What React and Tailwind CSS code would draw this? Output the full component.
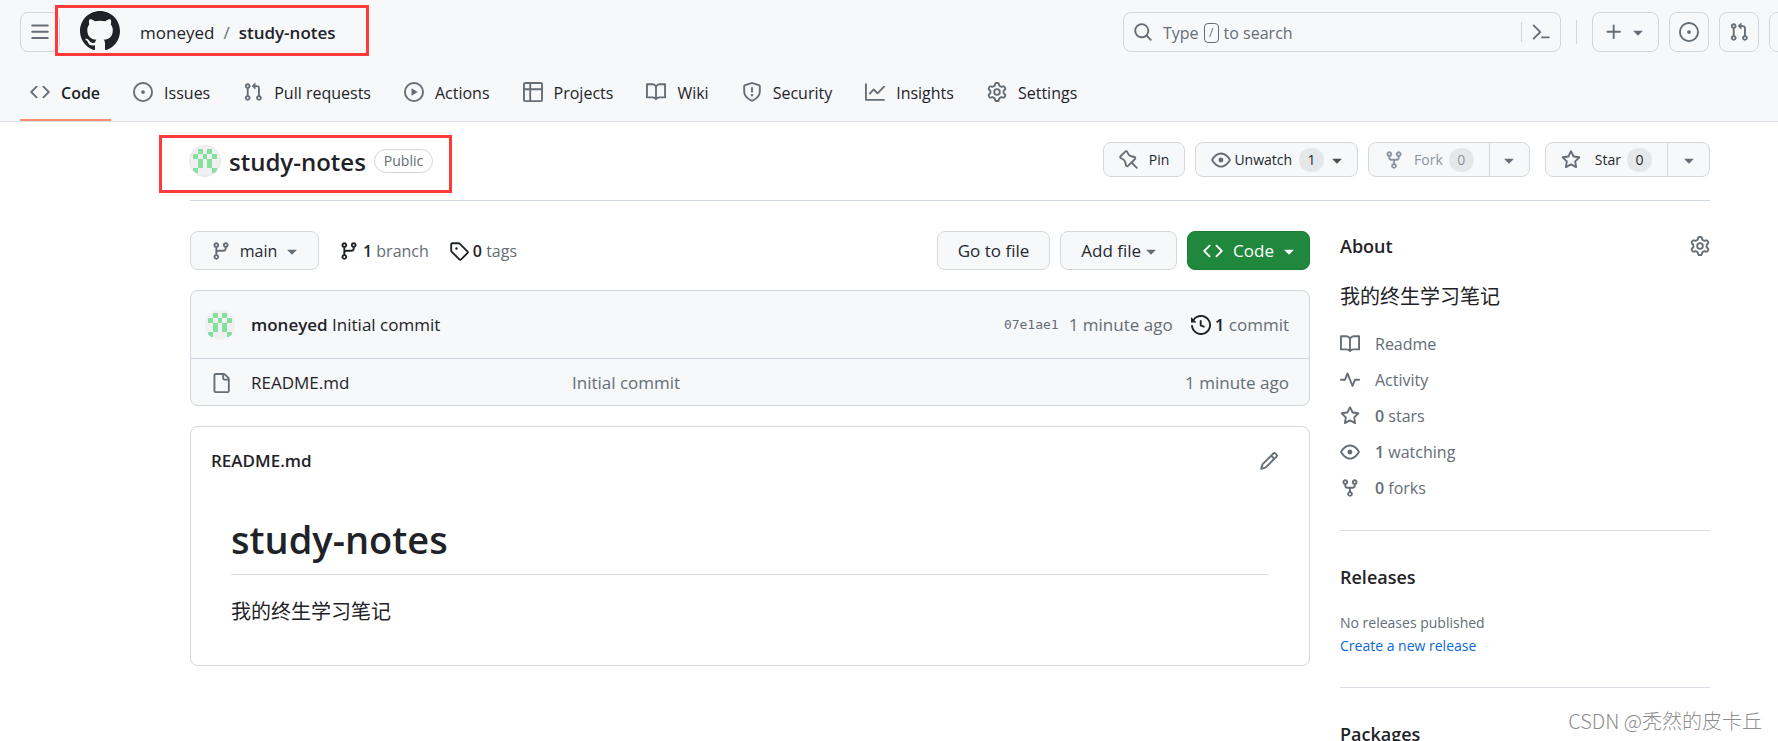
import React from "react";

const PATHS = {
  bars: "M1 2.75A.75.75 0 0 1 1.75 2h12.5a.75.75 0 0 1 0 1.5H1.75A.75.75 0 0 1 1 2.75Zm0 5A.75.75 0 0 1 1.75 7h12.5a.75.75 0 0 1 0 1.5H1.75A.75.75 0 0 1 1 7.75ZM1.75 12h12.5a.75.75 0 0 1 0 1.5H1.75a.75.75 0 0 1 0-1.5Z",
  github:
    "M8 0c4.42 0 8 3.58 8 8a8.013 8.013 0 0 1-5.45 7.59c-.4.08-.55-.17-.55-.38 0-.27.01-1.13.01-2.2 0-.75-.25-1.23-.54-1.48 1.78-.2 3.65-.88 3.65-3.95 0-.88-.31-1.59-.82-2.15.08-.2.36-1.02-.08-2.12 0 0-.67-.22-2.2.82-.64-.18-1.32-.27-2-.27-.68 0-1.36.09-2 .27-1.53-1.03-2.2-.82-2.2-.82-.44 1.1-.16 1.92-.08 2.12-.51.56-.82 1.28-.82 2.15 0 3.06 1.86 3.75 3.64 3.95-.23.2-.44.55-.51 1.07-.46.21-1.61.55-2.33-.66-.15-.24-.6-.83-1.23-.82-.67.01-.27.38.01.53.34.19.73.9.82 1.13.16.45.68 1.31 2.69.94 0 .67.01 1.3.01 1.49 0 .21-.15.45-.55.38A7.995 7.995 0 0 1 0 8c0-4.42 3.58-8 8-8Z",
  code: "m11.28 3.22 4.25 4.25a.75.75 0 0 1 0 1.06l-4.25 4.25a.749.749 0 0 1-1.275-.326.749.749 0 0 1 .215-.734L13.94 8l-3.72-3.72a.749.749 0 0 1 .326-1.275.749.749 0 0 1 .734.215Zm-6.56 0a.751.751 0 0 1 1.042.018.751.751 0 0 1 .018 1.042L2.06 8l3.72 3.72a.749.749 0 0 1-.326 1.275.749.749 0 0 1-.734-.215L.47 8.53a.75.75 0 0 1 0-1.06Z",
  issue:
    "M8 9.5a1.5 1.5 0 1 0 0-3 1.5 1.5 0 0 0 0 3ZM8 0a8 8 0 1 1 0 16A8 8 0 0 1 8 0ZM1.5 8a6.5 6.5 0 1 0 13 0 6.5 6.5 0 0 0-13 0Z",
  pull: "M1.5 3.25a2.25 2.25 0 1 1 3 2.122v5.256a2.251 2.251 0 1 1-1.5 0V5.372A2.25 2.25 0 0 1 1.5 3.25Zm5.677-.177L9.573.677A.25.25 0 0 1 10 .854V2.5h1A2.5 2.5 0 0 1 13.5 5v5.628a2.251 2.251 0 1 1-1.5 0V5a1 1 0 0 0-1-1h-1v1.646a.25.25 0 0 1-.427.177L7.177 3.427a.25.25 0 0 1 0-.354ZM3.75 2.5a.75.75 0 1 0 0 1.5.75.75 0 0 0 0-1.5Zm0 9.5a.75.75 0 1 0 0 1.5.75.75 0 0 0 0-1.5Zm8.25.75a.75.75 0 1 0 1.5 0 .75.75 0 0 0-1.5 0Z",
  play: "M8 0a8 8 0 1 1 0 16A8 8 0 0 1 8 0ZM1.5 8a6.5 6.5 0 1 0 13 0 6.5 6.5 0 0 0-13 0Zm4.879-2.773 4.264 2.559a.25.25 0 0 1 0 .428l-4.264 2.559A.25.25 0 0 1 6 10.559V5.442a.25.25 0 0 1 .379-.215Z",
  table:
    "M0 1.75C0 .784.784 0 1.75 0h12.5C15.216 0 16 .784 16 1.75v12.5A1.75 1.75 0 0 1 14.25 16H1.75A1.75 1.75 0 0 1 0 14.25ZM6.5 6.5v8h7.75a.25.25 0 0 0 .25-.25V6.5Zm8-1.5V1.75a.25.25 0 0 0-.25-.25H6.5V5Zm-13 1.5v7.75c0 .138.112.25.25.25H5v-8ZM5 5V1.5H1.75a.25.25 0 0 0-.25.25V5Z",
  book: "M0 1.75A.75.75 0 0 1 .75 1h4.253c1.227 0 2.317.59 3 1.501A3.743 3.743 0 0 1 11.006 1h4.245a.75.75 0 0 1 .75.75v10.5a.75.75 0 0 1-.75.75h-4.507a2.25 2.25 0 0 0-1.591.659l-.622.621a.75.75 0 0 1-1.06 0l-.622-.621A2.25 2.25 0 0 0 5.258 13H.75a.75.75 0 0 1-.75-.75Zm7.251 10.324.004-5.073-.002-2.253A2.25 2.25 0 0 0 5.003 2.5H1.5v9h3.757a3.75 3.75 0 0 1 1.994.574ZM8.755 4.75l-.004 7.322a3.752 3.752 0 0 1 1.992-.572H14.5v-9h-3.495a2.25 2.25 0 0 0-2.25 2.25Z",
  shield:
    "M7.467.133a1.748 1.748 0 0 1 1.066 0l5.25 1.68A1.75 1.75 0 0 1 15 3.48V7c0 1.566-.32 3.182-1.303 4.682-.983 1.498-2.585 2.813-5.032 3.855a1.697 1.697 0 0 1-1.33 0c-2.447-1.042-4.049-2.357-5.032-3.855C1.32 10.182 1 8.566 1 7V3.48a1.75 1.75 0 0 1 1.217-1.667Zm.61 1.429a.25.25 0 0 0-.153 0l-5.25 1.68a.25.25 0 0 0-.174.238V7c0 1.358.275 2.666 1.057 3.86.784 1.194 2.121 2.34 4.366 3.297a.196.196 0 0 0 .154 0c2.245-.956 3.582-2.104 4.366-3.298C13.225 9.666 13.5 8.36 13.5 7V3.48a.251.251 0 0 0-.174-.237l-5.25-1.68ZM8.75 4.75v3a.75.75 0 0 1-1.5 0v-3a.75.75 0 0 1 1.5 0ZM9 10.5a1 1 0 1 1-2 0 1 1 0 0 1 2 0Z",
  graph:
    "M1.5 1.75V13.5h13.75a.75.75 0 0 1 0 1.5H.75a.75.75 0 0 1-.75-.75V1.75a.75.75 0 0 1 1.5 0Zm14.28 2.53-5.25 5.25a.75.75 0 0 1-1.06 0L7 7.06 4.28 9.78a.751.751 0 0 1-1.042-.018.751.751 0 0 1-.018-1.042l3.25-3.25a.75.75 0 0 1 1.06 0L10 7.94l4.72-4.72a.751.751 0 0 1 1.042.018.751.751 0 0 1 .018 1.042Z",
  gear: "M8 0a8.2 8.2 0 0 1 .701.031C9.444.095 9.99.645 10.16 1.29l.288 1.107c.018.066.079.158.212.224.231.114.454.243.668.386.123.082.233.09.299.071l1.103-.303c.644-.176 1.392.021 1.82.63.27.385.506.792.704 1.218.315.675.111 1.422-.364 1.891l-.814.806c-.049.048-.098.147-.088.294.016.257.016.515 0 .772-.01.147.038.246.088.294l.814.806c.475.469.679 1.216.364 1.891a7.977 7.977 0 0 1-.704 1.217c-.428.61-1.176.807-1.82.63l-1.102-.302c-.067-.019-.177-.011-.3.071a5.909 5.909 0 0 1-.668.386c-.133.066-.194.158-.211.224l-.29 1.106c-.168.646-.715 1.196-1.458 1.26a8.006 8.006 0 0 1-1.402 0c-.743-.064-1.289-.614-1.458-1.26l-.289-1.106c-.018-.066-.079-.158-.212-.224a5.738 5.738 0 0 1-.668-.386c-.123-.082-.233-.09-.299-.071l-1.103.303c-.644.176-1.392-.021-1.82-.63a8.12 8.12 0 0 1-.704-1.218c-.315-.675-.111-1.422.363-1.891l.815-.806c.05-.048.098-.147.088-.294a6.214 6.214 0 0 1 0-.772c.01-.147-.038-.246-.088-.294l-.815-.806C.635 6.045.431 5.298.746 4.623a7.92 7.92 0 0 1 .704-1.217c.428-.61 1.176-.807 1.82-.63l1.102.302c.067.019.177.011.3-.071.214-.143.437-.272.668-.386.133-.066.194-.158.211-.224l.29-1.106C6.009.645 6.556.095 7.299.03 7.53.01 7.764 0 8 0Zm-.571 1.525c-.036.003-.108.036-.137.146l-.289 1.105c-.147.561-.549.967-.998 1.189-.173.086-.34.183-.5.29-.417.278-.97.423-1.529.27l-1.103-.303c-.109-.03-.175.016-.195.045-.22.312-.412.644-.573.99-.014.031-.021.11.059.19l.815.806c.411.406.562.957.53 1.456a4.709 4.709 0 0 0 0 .582c.032.499-.119 1.05-.53 1.456l-.815.806c-.081.08-.073.159-.059.19.162.346.353.677.573.989.02.03.085.076.195.046l1.102-.303c.56-.153 1.113-.008 1.53.27.161.107.328.204.501.29.447.222.85.629.997 1.189l.289 1.105c.029.109.101.143.137.146a6.6 6.6 0 0 0 1.142 0c.036-.003.108-.036.137-.146l.289-1.105c.147-.561.549-.967.998-1.189.173-.086.34-.183.5-.29.417-.278.97-.423 1.529-.27l1.103.303c.109.029.175-.016.195-.045.22-.313.411-.644.573-.99.014-.031.021-.11-.059-.19l-.815-.806c-.411-.406-.562-.957-.53-1.456a4.709 4.709 0 0 0 0-.582c-.032-.499.119-1.05.53-1.456l.815-.806c.081-.08.073-.159.059-.19a6.464 6.464 0 0 0-.573-.989c-.02-.03-.085-.076-.195-.046l-1.102.303c-.56.153-1.113.008-1.53-.27a4.44 4.44 0 0 0-.501-.29c-.447-.222-.85-.629-.997-1.189l-.289-1.105c-.029-.11-.101-.143-.137-.146a6.6 6.6 0 0 0-1.142 0ZM11 8a3 3 0 1 1-6 0 3 3 0 0 1 6 0ZM9.5 8a1.5 1.5 0 1 0-3.001.001A1.5 1.5 0 0 0 9.5 8Z",
  search:
    "M10.68 11.74a6 6 0 0 1-7.922-8.982 6 6 0 0 1 8.982 7.922l3.04 3.04a.749.749 0 0 1-.326 1.275.749.749 0 0 1-.734-.215ZM11.5 7a4.499 4.499 0 1 0-8.997 0A4.499 4.499 0 0 0 11.5 7Z",
  command:
    "m6.354 8.04-4.773 4.773a.75.75 0 1 0 1.061 1.06L7.945 8.57a.75.75 0 0 0 0-1.06L2.642 2.206a.75.75 0 0 0-1.06 1.061L6.353 8.04ZM8.75 11.5a.75.75 0 0 0 0 1.5h5.5a.75.75 0 0 0 0-1.5h-5.5Z",
  plus: "M7.75 2a.75.75 0 0 1 .75.75V7h4.25a.75.75 0 0 1 0 1.5H8.5v4.25a.75.75 0 0 1-1.5 0V8.5H2.75a.75.75 0 0 1 0-1.5H7V2.75A.75.75 0 0 1 7.75 2Z",
  triangle:
    "m4.427 7.427 3.396 3.396a.25.25 0 0 0 .354 0l3.396-3.396A.25.25 0 0 0 11.396 7H4.604a.25.25 0 0 0-.177.427Z",
  pin: "M4.456.734a1.75 1.75 0 0 1 2.826.504l.613 1.327a3.081 3.081 0 0 0 2.084 1.707l2.454.584c1.332.317 1.8 1.972.832 2.94L11.06 10l3.72 3.72a.748.748 0 0 1-.332 1.265.75.75 0 0 1-.729-.205L10 11.06l-2.204 2.205c-.968.968-2.623.5-2.94-.832l-.584-2.454a3.081 3.081 0 0 0-1.707-2.084l-1.327-.613a1.75 1.75 0 0 1-.504-2.826L4.456.734ZM5.92 1.866a.25.25 0 0 0-.404-.072L1.794 5.516a.25.25 0 0 0 .072.404l1.328.613A4.582 4.582 0 0 1 5.73 9.63l.584 2.454a.25.25 0 0 0 .42.12l5.47-5.47a.25.25 0 0 0-.12-.42L9.63 5.73a4.581 4.581 0 0 1-3.098-2.537L5.92 1.866Z",
  eye: "M8 2c1.981 0 3.671.992 4.933 2.078 1.27 1.091 2.187 2.345 2.637 3.023a1.62 1.62 0 0 1 0 1.798c-.45.678-1.367 1.932-2.637 3.023C11.67 13.008 9.981 14 8 14c-1.981 0-3.671-.992-4.933-2.078C1.797 10.83.88 9.576.43 8.898a1.62 1.62 0 0 1 0-1.798c.45-.677 1.367-1.931 2.637-3.022C4.33 2.992 6.019 2 8 2ZM1.679 7.932a.12.12 0 0 0 0 .136c.411.622 1.241 1.75 2.366 2.717C5.176 11.758 6.527 12.5 8 12.5c1.473 0 2.825-.742 3.955-1.715 1.124-.967 1.954-2.096 2.366-2.717a.12.12 0 0 0 0-.136c-.412-.621-1.242-1.75-2.366-2.717C10.824 4.242 9.473 3.5 8 3.5c-1.473 0-2.825.742-3.955 1.715-1.124.967-1.954 2.096-2.366 2.717ZM8 10a2 2 0 1 1-.001-3.999A2 2 0 0 1 8 10Z",
  fork: "M5 5.372v.878c0 .414.336.75.75.75h4.5a.75.75 0 0 0 .75-.75v-.878a2.25 2.25 0 1 1 1.5 0v.878a2.25 2.25 0 0 1-2.25 2.25h-1.5v2.128a2.251 2.251 0 1 1-1.5 0V8.5h-1.5A2.25 2.25 0 0 1 3.5 6.25v-.878a2.25 2.25 0 1 1 1.5 0ZM5 3.25a.75.75 0 1 0-1.5 0 .75.75 0 0 0 1.5 0Zm6.75.75a.75.75 0 1 0 0-1.5.75.75 0 0 0 0 1.5Zm-3 8.75a.75.75 0 1 0-1.5 0 .75.75 0 0 0 1.5 0Z",
  star: "M8 .25a.75.75 0 0 1 .673.418l1.882 3.815 4.21.612a.75.75 0 0 1 .416 1.279l-3.046 2.97.719 4.192a.751.751 0 0 1-1.088.791L8 12.347l-3.766 1.98a.75.75 0 0 1-1.088-.79l.72-4.194L.818 6.374a.75.75 0 0 1 .416-1.28l4.21-.611L7.327.668A.75.75 0 0 1 8 .25Zm0 2.445L6.615 5.5a.75.75 0 0 1-.564.41l-3.097.45 2.24 2.184a.75.75 0 0 1 .216.664l-.528 3.084 2.769-1.456a.75.75 0 0 1 .698 0l2.77 1.456-.53-3.084a.75.75 0 0 1 .216-.664l2.24-2.183-3.096-.45a.75.75 0 0 1-.564-.41L8 2.694Z",
  branch:
    "M9.5 3.25a2.25 2.25 0 1 1 3 2.122V6A2.5 2.5 0 0 1 10 8.5H6a1 1 0 0 0-1 1v1.128a2.251 2.251 0 1 1-1.5 0V5.372a2.25 2.25 0 1 1 1.5 0v1.836A2.493 2.493 0 0 1 6 7h4a1 1 0 0 0 1-1v-.628A2.25 2.25 0 0 1 9.5 3.25Zm-6 0a.75.75 0 1 0 1.5 0 .75.75 0 0 0-1.5 0Zm8.25-.75a.75.75 0 1 0 0 1.5.75.75 0 0 0 0-1.5ZM4.25 12a.75.75 0 1 0 0 1.5.75.75 0 0 0 0-1.5Z",
  tag: "M1 7.775V2.75C1 1.784 1.784 1 2.75 1h5.025c.464 0 .91.184 1.238.513l6.25 6.25a1.75 1.75 0 0 1 0 2.474l-5.026 5.026a1.75 1.75 0 0 1-2.474 0l-6.25-6.25A1.752 1.752 0 0 1 1 7.775Zm1.5 0c0 .066.026.13.073.177l6.25 6.25a.25.25 0 0 0 .354 0l5.025-5.025a.25.25 0 0 0 0-.354l-6.25-6.25a.25.25 0 0 0-.177-.073H2.75a.25.25 0 0 0-.25.25ZM6 5a1 1 0 1 1 0 2 1 1 0 0 1 0-2Z",
  history:
    "m.427 1.927 1.215 1.215a8.002 8.002 0 1 1-1.6 5.685.75.75 0 1 1 1.493-.154 6.5 6.5 0 1 0 1.18-4.458l1.358 1.358A.25.25 0 0 1 3.896 6H.25A.25.25 0 0 1 0 5.75V2.104a.25.25 0 0 1 .427-.177ZM7.75 4a.75.75 0 0 1 .75.75v2.992l2.028.812a.75.75 0 0 1-.557 1.392l-2.5-1A.751.751 0 0 1 7 8.25v-3.5A.75.75 0 0 1 7.75 4Z",
  file: "M2 1.75C2 .784 2.784 0 3.75 0h6.586c.464 0 .909.184 1.237.513l2.914 2.914c.329.328.513.773.513 1.237v9.586A1.75 1.75 0 0 1 13.25 16h-9.5A1.75 1.75 0 0 1 2 14.25Zm1.75-.25a.25.25 0 0 0-.25.25v12.5c0 .138.112.25.25.25h9.5a.25.25 0 0 0 .25-.25V6h-2.75A1.75 1.75 0 0 1 9 4.25V1.5Zm6.75.062V4.25c0 .138.112.25.25.25h2.688l-.011-.013-2.914-2.914-.013-.011Z",
  pencil:
    "M11.013 1.427a1.75 1.75 0 0 1 2.474 0l1.086 1.086a1.75 1.75 0 0 1 0 2.474l-8.61 8.61c-.21.21-.47.364-.756.445l-3.251.93a.75.75 0 0 1-.927-.928l.929-3.25c.081-.286.235-.547.445-.758l8.61-8.61Zm.176 4.823L9.75 4.81l-6.286 6.287a.253.253 0 0 0-.064.108l-.558 1.953 1.953-.558a.253.253 0 0 0 .108-.064Zm1.238-3.763a.25.25 0 0 0-.354 0L10.811 3.75l1.439 1.44 1.263-1.263a.25.25 0 0 0 0-.354Z",
  pulse:
    "M6 2c.306 0 .582.187.696.471L10 10.731l1.304-3.26A.751.751 0 0 1 12 7h3.25a.75.75 0 0 1 0 1.5h-2.742l-1.812 4.528a.751.751 0 0 1-1.392 0L6 4.77 4.696 8.03A.75.75 0 0 1 4 8.5H.75a.75.75 0 0 1 0-1.5h2.742l1.812-4.529A.751.751 0 0 1 6 2Z",
};

function Icon({ name, className = "size-5 text-[#656d76]" }) {
  return (
    <svg viewBox="0 0 16 16" fill="currentColor" aria-hidden="true" className={`shrink-0 ${className}`}>
      <path d={PATHS[name]} />
    </svg>
  );
}

const CELLS = [
  [1, 0], [3, 0],
  [0, 1], [2, 1], [4, 1],
  [1, 2], [3, 2],
  [1, 3], [3, 3],
  [0, 4], [4, 4],
];

function Avatar({ className }) {
  return (
    <svg viewBox="0 0 32 32" aria-hidden="true" shapeRendering="crispEdges" className={`shrink-0 rounded-full bg-[#f0f0f0] ${className}`}>
      {CELLS.map(([x, y]) => (
        <rect key={`${x}-${y}`} x={3.5 + x * 5} y={3.5 + y * 5} width="5" height="5" fill="#85e0a0" />
      ))}
    </svg>
  );
}

const TABS = [
  ["code", "Code"],
  ["issue", "Issues"],
  ["pull", "Pull requests"],
  ["play", "Actions"],
  ["table", "Projects"],
  ["book", "Wiki"],
  ["shield", "Security"],
  ["graph", "Insights"],
  ["gear", "Settings"],
];

const FACTS = [
  ["book", null, "Readme"],
  ["pulse", null, "Activity"],
  ["star", "0", "stars"],
  ["eye", "1", "watching"],
  ["fork", "0", "forks"],
];

const headerButton =
  "flex h-10 shrink-0 items-center justify-center rounded-lg border border-[#d0d7de] text-[#656d76]";
const button =
  "flex items-center rounded-lg border border-[#d5d8da] bg-[#f6f8fa] text-[#24292f]";

function Counter({ children }) {
  return (
    <span className="flex h-6 w-[25px] items-center justify-center rounded-full bg-[#e5e8eb]">{children}</span>
  );
}

function Header() {
  return (
    <header className="flex h-[122px] shrink-0 flex-col overflow-hidden border-b border-[#d8dee4] bg-[#f6f8fa]">
      <div className="flex h-16 shrink-0 items-center pl-5">
        <button aria-label="Open menu" className={`${headerButton} w-10`}>
          <Icon name="bars" />
        </button>
        <div className="z-10 -mt-[3px] -ml-[5px] flex h-[51px] w-[314px] shrink-0 items-center border-[3px] border-[#ff3a3a] pl-[22px]">
          <a href="#home" aria-label="Homepage">
            <Icon name="github" className="size-10 text-[#1f2328]" />
          </a>
          <nav aria-label="Breadcrumb" className="flex pt-[5px] pl-5 text-[17px] leading-6">
            <a href="#owner">moneyed</a>
            <span className="px-[9px] text-[#656d76]">/</span>
            <a href="#repo" className="font-semibold">study-notes</a>
          </nav>
        </div>
        <div className="ml-auto flex items-center">
          <label className="flex h-10 w-[438px] items-center rounded-lg border border-[#d0d7de] pl-[9px] text-base text-[#656d76]">
            <Icon name="search" />
            <span className="flex items-center pt-px pl-[10px]">
              Type
              <kbd className="mx-[5px] flex h-5 w-[15px] items-center justify-center rounded border border-[#656d76] font-[inherit] text-xs">/</kbd>
              to search
            </span>
            <input aria-label="Search" className="min-w-0 flex-1 bg-transparent outline-none" />
            <span className="flex h-5 items-center border-l border-[#d0d7de] px-[9px]">
              <Icon name="command" />
            </span>
          </label>
          <span className="mx-[15px] h-6 w-px bg-[#d0d7de]" />
          <button aria-label="Create new" className={`${headerButton} w-[67px] gap-1`}>
            <Icon name="plus" />
            <Icon name="triangle" />
          </button>
          <button aria-label="Issues" className={`${headerButton} ml-[10px] w-10`}>
            <Icon name="issue" />
          </button>
          <button aria-label="Pull requests" className={`${headerButton} ml-[10px] w-10`}>
            <Icon name="pull" />
          </button>
          <button aria-label="Notifications" className={`${headerButton} -mr-[31px] ml-[10px] w-10`} />
        </div>
      </div>
      <nav aria-label="Repository" className="flex flex-1 gap-3 pl-5 text-base">
        {TABS.map(([icon, label], i) => (
          <a
            key={label}
            href={`#${icon}`}
            className={`flex items-center gap-[11px] border-b-2 pr-[11px] pl-[10px] ${
              i === 0 ? "border-[#fd8c73] font-semibold" : "border-transparent"
            }`}
          >
            <Icon name={icon} />
            <span className="pt-[3px]">{label}</span>
          </a>
        ))}
      </nav>
    </header>
  );
}

function RepoHead() {
  return (
    <div className="flex h-[79px] items-start border-b border-[#d0d7de]">
      <div className="mt-[13px] -ml-[31px] flex h-[58px] w-[293px] items-center border-[3px] border-[#ff3a3a] pl-[27px]">
        <Avatar className="mb-[6px] size-8 border border-[#e4e6e8]" />
        <h1 className="mb-1 pl-2 text-2xl leading-8 font-semibold">study-notes</h1>
        <span className="mb-[6px] ml-2 flex h-6 items-center rounded-full border border-[#d0d7de] px-[9px] text-sm text-[#656d76]">
          Public
        </span>
      </div>
      <div className="mt-5 ml-auto flex gap-[10px] text-sm">
        <button className={`${button} h-[35px] gap-[10px] px-[15px]`}>
          <Icon name="pin" />
          Pin
        </button>
        <button className={`${button} h-[35px] gap-[3px] pr-[10px] pl-[15px]`}>
          <Icon name="eye" />
          Unwatch
          <span className="pl-1"><Counter>1</Counter></span>
          <Icon name="triangle" className="size-5 text-[#4b5056]" />
        </button>
        <div className={`${button} h-[35px]`}>
          <button disabled className="flex items-center gap-[10px] pr-[15px] pl-[15px] text-[#8c959f]">
            <Icon name="fork" className="size-5" />
            <span className="flex items-center gap-[6px]">Fork <Counter>0</Counter></span>
          </button>
          <button aria-label="Fork options" className="flex h-full w-10 items-center justify-center border-l border-[#d5d8da]">
            <Icon name="triangle" />
          </button>
        </div>
        <div className={`${button} ml-[5px] h-[35px]`}>
          <button className="flex items-center gap-[14px] pr-[15px] pl-[15px]">
            <Icon name="star" />
            <span className="flex items-center gap-[6px]">Star <Counter>0</Counter></span>
          </button>
          <button aria-label="Star options" className="flex h-full w-[42px] items-center justify-center border-l border-[#d5d8da]">
            <Icon name="triangle" />
          </button>
        </div>
      </div>
    </div>
  );
}

function Toolbar() {
  return (
    <div className="flex h-[39px] items-center text-base">
      <button className={`${button} h-[39px] w-[129px] justify-center gap-[5px] pl-1`}>
        <Icon name="branch" />
        <span className="pl-1">main</span>
        <Icon name="triangle" />
      </button>
      <a href="#branches" className="flex items-center gap-1 pl-5">
        <Icon name="branch" className="size-5" />
        <span className="text-[#656d76]"><b className="font-semibold text-[#1f2328]">1</b> branch</span>
      </a>
      <a href="#tags" className="flex items-center gap-1 pl-5">
        <Icon name="tag" className="size-5" />
        <span className="text-[#656d76]"><b className="font-semibold text-[#1f2328]">0</b> tags</span>
      </a>
      <div className="ml-auto flex gap-[10px] text-[17px]">
        <button className={`${button} h-[39px] px-5`}>Go to file</button>
        <button className={`${button} h-[39px] pr-[15px] pl-5`}>
          Add file
          <Icon name="triangle" />
        </button>
        <button className="flex h-[39px] items-center rounded-lg border border-[#1c7c38] bg-[#1f883d] pr-[10px] pl-[15px] text-white">
          <Icon name="code" className="size-5" />
          <span className="pr-[5px] pl-[10px]">Code</span>
          <Icon name="triangle" className="size-5" />
        </button>
      </div>
    </div>
  );
}

function Files() {
  return (
    <section aria-label="Files" className="mt-5 overflow-hidden rounded-lg border border-[#d0d7de] bg-[#f6f8fa] text-[17px]">
      <div className="flex h-[68px] items-center border-b border-[#d0d7de] pr-5 pl-[14px]">
        <Avatar className="size-[30px]" />
        <p className="pl-4"><a href="#owner" className="font-semibold">moneyed</a> <a href="#commit">Initial commit</a></p>
        <div className="ml-auto flex items-center text-[#656d76]">
          <a href="#hash" className="pr-[10px] font-['DejaVu_Sans_Mono',monospace] text-[13px]">07e1ae1</a>
          <a href="#commit">1 minute ago</a>
          <a href="#commits" className="flex items-center gap-1 pl-[18px]">
            <Icon name="history" className="size-5 text-[#1f2328]" />
            <span><b className="font-semibold text-[#1f2328]">1</b> commit</span>
          </a>
        </div>
      </div>
      <table className="w-full table-fixed">
        <tbody>
          <tr className="h-[46px]">
            <td className="w-[60px] pt-px pl-5"><Icon name="file" /></td>
            <td className="w-[321px] pt-px"><a href="#readme">README.md</a></td>
            <td className="pt-px text-[#656d76]"><a href="#commit">Initial commit</a></td>
            <td className="pt-px pr-5 text-right text-[#656d76]">1 minute ago</td>
          </tr>
        </tbody>
      </table>
    </section>
  );
}

function Readme() {
  return (
    <article className="mt-5 rounded-lg border border-[#d0d7de] px-5 pb-[37px]">
      <div className="flex h-[68px] items-center">
        <h2 className="text-[17px] font-semibold">README.md</h2>
        <button aria-label="Edit README.md" className="mr-[10px] ml-auto"><Icon name="pencil" /></button>
      </div>
      <div className="px-5 pt-5">
        <h1 className="border-b border-[#d8dee4] pb-[11px] text-[38px] leading-12 font-semibold">study-notes</h1>
        <p className="pt-[22px] pb-px text-xl leading-[30px]">我的终生学习笔记</p>
      </div>
    </article>
  );
}

function Sidebar() {
  return (
    <aside className="w-[370px] shrink-0 text-base">
      <div className="flex items-center justify-between">
        <h2 className="text-lg leading-[30px] font-semibold">About</h2>
        <button aria-label="Edit repository details"><Icon name="gear" /></button>
      </div>
      <p className="pt-[21px] text-xl leading-[30px]">我的终生学习笔记</p>
      <ul className="flex flex-col gap-3 pt-5 text-[#656d76]">
        {FACTS.map(([icon, count, label]) => (
          <li key={label}>
            <a href={`#${label}`} className="flex items-center gap-[15px] leading-6">
              <Icon name={icon} />
              <span>{count && <b className="font-semibold">{count}</b>} {label}</span>
            </a>
          </li>
        ))}
      </ul>
      <section className="mt-[30px] border-t border-[#d8dee4] pt-[31px]">
        <h2 className="text-lg leading-[30px] font-semibold">Releases</h2>
        <p className="pt-[19px] text-sm leading-[23px] text-[#656d76]">No releases published</p>
        <a href="#new-release" className="block text-sm leading-[23px] text-[#0969da]">Create a new release</a>
      </section>
      <section className="mt-[30px] border-t border-[#d8dee4] pt-[31px]">
        <h2 className="text-lg leading-[30px] font-semibold">Packages</h2>
      </section>
    </aside>
  );
}

export default function App() {
  return (
    <div className="relative flex h-screen flex-col overflow-hidden bg-white font-['Open_Sans','Noto_Sans_CJK_SC',sans-serif] text-[#1f2328]">
      <Header />
      <main className="pr-[68px] pl-[190px]">
        <RepoHead />
        <div className="flex gap-[30px] pt-[30px]">
          <div className="min-w-0 flex-1">
            <Toolbar />
            <Files />
            <Readme />
          </div>
          <Sidebar />
        </div>
      </main>
      <p className="absolute right-4 bottom-[5px] font-['Noto_Sans_CJK_SC',sans-serif] text-xl leading-[30px] font-light text-[#8d8d8d]">CSDN @秃然的皮卡丘</p>
    </div>
  );
}
